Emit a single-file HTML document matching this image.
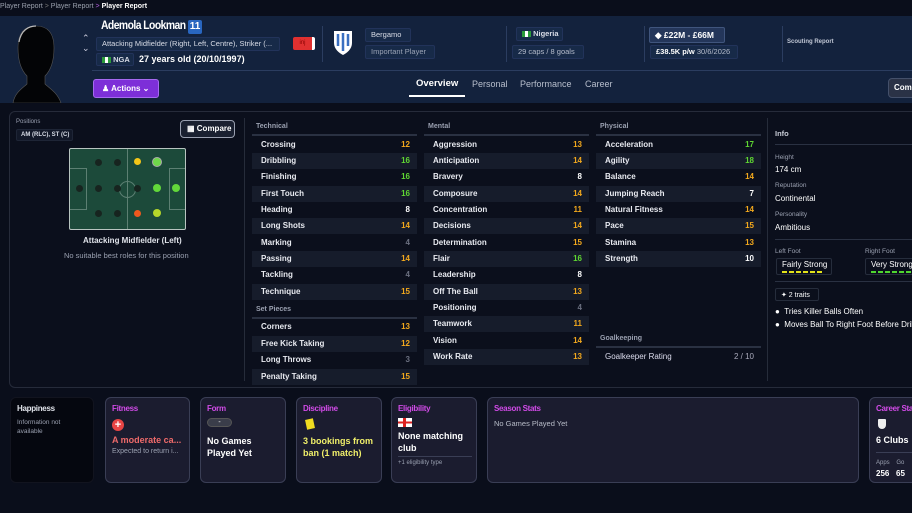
<!DOCTYPE html>
<html><head><meta charset="utf-8"><style>
*{margin:0;padding:0;box-sizing:border-box}
body{width:912px;height:513px;overflow:hidden;background:#0a0e1b;font-family:"Liberation Sans",sans-serif;color:#e8eaf0;position:relative;font-size:8px}
.a{position:absolute;white-space:nowrap}
.hdr{position:absolute;left:0;top:16px;width:912px;height:87px;background:#13223d}
.box{position:absolute;border:1px solid #22335a;background:#172a48;border-radius:2px;font-size:7.5px;padding:0 5px;color:#d8dce6;white-space:nowrap;overflow:hidden;line-height:12px}
.vd{position:absolute;width:1px;background:#2b3d60}
.main{position:absolute;left:9px;top:111px;width:910px;height:277px;border:1px solid #262b3a;border-radius:6px;background:#0b0f1c}
.row{position:absolute;height:16px;font-size:8px;font-weight:bold;line-height:16px;padding:0 9px;color:#e8eaf0}
.row.s{background:#161c2b}
.row b{position:absolute;right:7px;top:0}
.o{color:#f2a81d}.g{color:#5fd632}.w{color:#fff}.gr{color:#6b7080}
.sh{position:absolute;font-size:7px;font-weight:bold;color:#9aa0b0}
.ln{position:absolute;height:2px;background:#2a3142}
.card{position:absolute;top:397px;height:86px;border:1px solid #3a3e55;border-radius:6px;background:#1b1c2f}
.ct{position:absolute;left:6px;top:6px;font-size:8px;font-weight:bold;color:#d24be8;letter-spacing:-.3px}
.dot{position:absolute;width:7px;height:7px;border-radius:50%;background:#17241f}
.flag{display:inline-block;width:9px;height:6px;vertical-align:-0.5px;background:linear-gradient(90deg,#2a9a3a 33%,#fff 33% 66%,#2a9a3a 66%)}
</style></head><body>
<div class="a" style="left:0;top:3px;font-size:7px;color:#9aa0ad">Player Report <span style="color:#777">&gt;</span> Player Report <span style="color:#b55fe0">&gt;</span> <span style="color:#fff;font-weight:bold">Player Report</span></div>
<div class="hdr"></div>
<svg class="a" style="left:5px;top:20px" width="62" height="83" viewBox="0 0 62 83"><path d="M8 83 C10 72 18 68 22 64 L22 56 C16 50 13 40 13 28 C13 12 20 6 31 6 C42 6 49 12 49 28 C49 40 46 50 40 56 L40 64 C44 68 52 72 56 83Z" fill="#030406" stroke="#555" stroke-width="0.6"/><path d="M14 22 C16 10 24 6 31 6" stroke="#bbb" stroke-width="1.2" fill="none"/></svg>
<div class="a" style="left:82px;top:33px;font-size:9px;color:#ccd">&#8963;</div>
<div class="a" style="left:82px;top:43px;font-size:9px;color:#ccd">&#8964;</div>
<div class="a" style="left:101px;top:20px;font-size:11.5px;font-weight:bold;color:#fff;letter-spacing:-.6px;transform:scaleX(.9);transform-origin:left">Ademola Lookman</div>
<div class="a" style="left:188px;top:20px;width:14px;height:14px;background:#2966c0;border-radius:2px;font-size:10px;font-weight:bold;text-align:center;line-height:14px;color:#fff">11</div>
<div class="box" style="left:96px;top:37px;width:184px;height:14px">Attacking Midfielder (Right, Left, Centre), Striker (...</div>
<div class="box" style="left:96px;top:53px;width:38px;height:13px;font-weight:bold"><span class="flag"></span> NGA</div>
<div class="a" style="left:139px;top:54px;font-size:9px;font-weight:bold;color:#fff">27 years old (20/10/1997)</div>
<div class="a" style="left:293px;top:37px;width:22px;height:13px;background:#e03030;border-radius:2px;border-right:3px solid #fff;font-size:6px;color:#800;text-align:center;line-height:13px">inj</div>
<div class="vd" style="left:322px;top:26px;height:36px"></div>
<svg class="a" style="left:332px;top:29px" width="22" height="27" viewBox="0 0 22 27"><path d="M2 2 L20 2 L20 14 C20 20 15 24 11 26 C7 24 2 20 2 14Z" fill="#fff"/><path d="M6 5 L6 17 M11 4 L11 22 M16 5 L16 17" stroke="#3a6fc0" stroke-width="2.5"/></svg>
<div class="box" style="left:365px;top:28px;width:46px;height:14px">Bergamo</div>
<div class="box" style="left:365px;top:45px;width:70px;height:14px;color:#9aa3b5">Important Player</div>
<div class="vd" style="left:506px;top:26px;height:36px"></div>
<div class="box" style="left:516px;top:27px;width:47px;height:14px;font-weight:bold"><span class="flag"></span> Nigeria</div>
<div class="box" style="left:512px;top:45px;width:72px;height:14px;color:#b5bccb">29 caps / 8 goals</div>
<div class="vd" style="left:644px;top:26px;height:36px"></div>
<div class="box" style="left:649px;top:27px;width:76px;height:16px;background:#24365a;border-color:#40557d;font-weight:bold;font-size:8.5px;color:#fff;line-height:14px">&#9670; £22M - £66M</div>
<div class="box" style="left:650px;top:45px;width:88px;height:14px;color:#b5bccb"><b style="color:#fff">£38.5K p/w</b> 30/6/2026</div>
<div class="vd" style="left:782px;top:26px;height:36px"></div>
<div class="a" style="left:787px;top:39px;font-size:6px;font-weight:bold;color:#c0c6d4">Scouting Report</div>
<div class="a" style="left:92px;top:70px;width:820px;height:1px;background:#2b3d60"></div>
<div class="a" style="left:93px;top:79px;width:66px;height:19px;background:#7d2fd8;border:1px solid #a66af0;border-radius:3px;font-size:8px;font-weight:bold;color:#fff;line-height:17px;padding-left:8px">&#9823; Actions &#8964;</div>
<div class="a" style="left:416px;top:78px;font-size:9.5px;font-weight:bold;color:#fff">Overview</div>
<div class="a" style="left:409px;top:95px;width:56px;height:2px;background:#fff"></div>
<div class="a" style="left:472px;top:79px;font-size:9px;color:#b8bfcd">Personal</div>
<div class="a" style="left:520px;top:79px;font-size:9px;color:#b8bfcd">Performance</div>
<div class="a" style="left:585px;top:79px;font-size:9px;color:#b8bfcd">Career</div>
<div class="a" style="left:888px;top:78px;width:40px;height:20px;background:#2a3246;border:1px solid #44506a;border-radius:4px;font-size:8px;font-weight:bold;color:#fff;line-height:18px;padding-left:5px">Comp</div>

<div class="main"></div>
<div class="a" style="left:16px;top:119px;font-size:6px;color:#9aa0b0">Positions</div>
<div class="box" style="left:16px;top:129px;width:57px;height:12px;background:#121828;border-color:#1e2536;font-size:6px;font-weight:bold;line-height:10px;padding:0 4px">AM (RLC), ST (C)</div>
<div class="a" style="left:180px;top:120px;width:55px;height:18px;border:1px solid #9aa0b0;border-radius:4px;background:#1a2030;font-size:8px;font-weight:bold;color:#fff;line-height:16px;padding-left:6px">&#9638; Compare</div>
<div class="a" style="left:69px;top:148px;width:117px;height:82px;background:#1c4a3a;border:1px solid #b8c4c0;border-radius:2px;overflow:hidden">
<div class="a" style="left:57px;top:0;width:1px;height:82px;background:#5c7f72"></div>
<div class="a" style="left:49px;top:32px;width:17px;height:17px;border:1px solid #5c7f72;border-radius:50%"></div>
<div class="a" style="left:-1px;top:19px;width:18px;height:42px;border:1px solid #5c7f72"></div>
<div class="a" style="left:99px;top:19px;width:18px;height:42px;border:1px solid #5c7f72"></div>
<div class="dot" style="left:25px;top:10px"></div><div class="dot" style="left:44px;top:10px"></div>
<div class="dot" style="left:64px;top:9px;background:#f4c518"></div>
<div class="dot" style="left:82px;top:8px;width:10px;height:10px;background:#6fd84a;border:1px solid #aaa"></div>
<div class="dot" style="left:6px;top:36px"></div><div class="dot" style="left:25px;top:36px"></div><div class="dot" style="left:44px;top:36px"></div><div class="dot" style="left:64px;top:36px"></div>
<div class="dot" style="left:83px;top:35px;width:8px;height:8px;background:#62d83a"></div>
<div class="dot" style="left:102px;top:35px;width:8px;height:8px;background:#62d83a"></div>
<div class="dot" style="left:25px;top:61px"></div><div class="dot" style="left:44px;top:61px"></div>
<div class="dot" style="left:64px;top:61px;background:#f0581e"></div>
<div class="dot" style="left:83px;top:60px;width:8px;height:8px;background:#b5d62a"></div>
</div>
<div class="a" style="left:83px;top:236px;font-size:8px;font-weight:bold;color:#e0e3ea">Attacking Midfielder (Left)</div>
<div class="a" style="left:64px;top:251px;font-size:7.5px;color:#9aa0b0">No suitable best roles for this position</div>
<div class="a" style="left:244px;top:118px;width:1px;height:263px;background:#262c3a"></div>
<div class="a" style="left:767px;top:118px;width:1px;height:263px;background:#262c3a"></div>

<div class="sh" style="left:256px;top:123px">Technical</div><div class="ln" style="left:252px;top:134px;width:165px"></div>
<div class="row" style="left:252px;top:137px;width:165px">Crossing<b class="o">12</b></div>
<div class="row s" style="left:252px;top:153px;width:165px">Dribbling<b class="g">16</b></div>
<div class="row" style="left:252px;top:169px;width:165px">Finishing<b class="g">16</b></div>
<div class="row s" style="left:252px;top:186px;width:165px">First Touch<b class="g">16</b></div>
<div class="row" style="left:252px;top:202px;width:165px">Heading<b class="w">8</b></div>
<div class="row s" style="left:252px;top:218px;width:165px">Long Shots<b class="o">14</b></div>
<div class="row" style="left:252px;top:235px;width:165px">Marking<b class="gr">4</b></div>
<div class="row s" style="left:252px;top:251px;width:165px">Passing<b class="o">14</b></div>
<div class="row" style="left:252px;top:267px;width:165px">Tackling<b class="gr">4</b></div>
<div class="row s" style="left:252px;top:284px;width:165px">Technique<b class="o">15</b></div>
<div class="sh" style="left:256px;top:306px">Set Pieces</div><div class="ln" style="left:252px;top:317px;width:165px"></div>
<div class="row" style="left:252px;top:319px;width:165px">Corners<b class="o">13</b></div>
<div class="row s" style="left:252px;top:336px;width:165px">Free Kick Taking<b class="o">12</b></div>
<div class="row" style="left:252px;top:352px;width:165px">Long Throws<b class="gr">3</b></div>
<div class="row s" style="left:252px;top:369px;width:165px">Penalty Taking<b class="o">15</b></div>

<div class="sh" style="left:428px;top:123px">Mental</div><div class="ln" style="left:424px;top:134px;width:165px"></div>
<div class="row" style="left:424px;top:137px;width:165px">Aggression<b class="o">13</b></div>
<div class="row s" style="left:424px;top:153px;width:165px">Anticipation<b class="o">14</b></div>
<div class="row" style="left:424px;top:169px;width:165px">Bravery<b class="w">8</b></div>
<div class="row s" style="left:424px;top:186px;width:165px">Composure<b class="o">14</b></div>
<div class="row" style="left:424px;top:202px;width:165px">Concentration<b class="o">11</b></div>
<div class="row s" style="left:424px;top:218px;width:165px">Decisions<b class="o">14</b></div>
<div class="row" style="left:424px;top:235px;width:165px">Determination<b class="o">15</b></div>
<div class="row s" style="left:424px;top:251px;width:165px">Flair<b class="g">16</b></div>
<div class="row" style="left:424px;top:267px;width:165px">Leadership<b class="w">8</b></div>
<div class="row s" style="left:424px;top:284px;width:165px">Off The Ball<b class="o">13</b></div>
<div class="row" style="left:424px;top:300px;width:165px">Positioning<b class="gr">4</b></div>
<div class="row s" style="left:424px;top:316px;width:165px">Teamwork<b class="o">11</b></div>
<div class="row" style="left:424px;top:333px;width:165px">Vision<b class="o">14</b></div>
<div class="row s" style="left:424px;top:349px;width:165px">Work Rate<b class="o">13</b></div>

<div class="sh" style="left:600px;top:123px">Physical</div><div class="ln" style="left:596px;top:134px;width:165px"></div>
<div class="row" style="left:596px;top:137px;width:165px">Acceleration<b class="g">17</b></div>
<div class="row s" style="left:596px;top:153px;width:165px">Agility<b class="g">18</b></div>
<div class="row" style="left:596px;top:169px;width:165px">Balance<b class="o">14</b></div>
<div class="row s" style="left:596px;top:186px;width:165px">Jumping Reach<b class="w">7</b></div>
<div class="row" style="left:596px;top:202px;width:165px">Natural Fitness<b class="o">14</b></div>
<div class="row s" style="left:596px;top:218px;width:165px">Pace<b class="o">15</b></div>
<div class="row" style="left:596px;top:235px;width:165px">Stamina<b class="o">13</b></div>
<div class="row s" style="left:596px;top:251px;width:165px">Strength<b class="w">10</b></div>
<div class="sh" style="left:600px;top:335px">Goalkeeping</div><div class="ln" style="left:596px;top:346px;width:165px"></div>
<div class="row" style="left:596px;top:349px;width:165px;font-weight:normal;color:#dde">Goalkeeper Rating<b style="color:#aab;font-weight:normal">2 / 10</b></div>

<div class="a" style="left:775px;top:129px;font-size:7.5px;font-weight:bold;color:#c8ccd6">Info</div>
<div class="a" style="left:775px;top:144px;width:140px;height:1px;background:#2a3142"></div>
<div class="a" style="left:775px;top:154px;font-size:6.5px;color:#9aa0b0">Height</div>
<div class="a" style="left:775px;top:165px;font-size:8px;color:#fff">174 cm</div>
<div class="a" style="left:775px;top:182px;font-size:6.5px;color:#9aa0b0">Reputation</div>
<div class="a" style="left:775px;top:194px;font-size:8px;color:#fff">Continental</div>
<div class="a" style="left:775px;top:211px;font-size:6.5px;color:#9aa0b0">Personality</div>
<div class="a" style="left:775px;top:223px;font-size:8px;color:#fff">Ambitious</div>
<div class="a" style="left:775px;top:239px;width:140px;height:1px;background:#2a3142"></div>
<div class="a" style="left:775px;top:248px;font-size:6.5px;color:#9aa0b0">Left Foot</div>
<div class="a" style="left:865px;top:248px;font-size:6.5px;color:#9aa0b0">Right Foot</div>
<div class="a" style="left:776px;top:258px;width:56px;height:17px;border:1px solid #262d3c;border-radius:2px;font-size:8px;color:#fff;padding:1px 5px">Fairly Strong<div style="height:2px;margin-top:2px;width:40px;background:repeating-linear-gradient(90deg,#e2e21a 0 5px,transparent 5px 7px)"></div></div>
<div class="a" style="left:865px;top:258px;width:56px;height:17px;border:1px solid #262d3c;border-radius:2px;font-size:8px;color:#fff;padding:1px 5px">Very Strong<div style="height:2px;margin-top:2px;width:50px;background:repeating-linear-gradient(90deg,#4fd630 0 5px,transparent 5px 7px)"></div></div>
<div class="a" style="left:775px;top:281px;width:140px;height:1px;background:#2a3142"></div>
<div class="a" style="left:775px;top:288px;width:44px;height:13px;border:1px solid #262d3c;border-radius:2px;font-size:7px;color:#fff;padding:2px 5px">&#10022; 2 traits</div>
<div class="a" style="left:775px;top:307px;font-size:8px;color:#fff">&#9679; &nbsp;Tries Killer Balls Often</div>
<div class="a" style="left:775px;top:320px;font-size:8px;color:#fff">&#9679; &nbsp;Moves Ball To Right Foot Before Dribbling</div>

<div class="card" style="left:10px;width:84px;background:#05070f;border-color:#12141f"><div class="ct" style="color:#e0e3ea">Happiness</div><div class="a" style="left:6px;top:20px;font-size:6.5px;color:#9aa0b0;white-space:normal;width:60px;line-height:9px">Information not available</div></div>
<div class="card" style="left:105px;width:85px"><div class="ct">Fitness</div><div class="a" style="left:6px;top:21px;width:12px;height:12px;border-radius:50%;background:#e84545;color:#fff;font-size:11px;font-weight:bold;text-align:center;line-height:12px">+</div><div class="a" style="left:6px;top:37px;font-size:9px;font-weight:bold;color:#ee6a6a">A moderate ca...</div><div class="a" style="left:6px;top:50px;font-size:7px;color:#9aa0b0">Expected to return i...</div></div>
<div class="card" style="left:200px;width:86px"><div class="ct">Form</div><div class="a" style="left:6px;top:20px;width:25px;height:9px;border-radius:5px;background:#3a3d4a;border:1px solid #555;color:#fff;font-size:7px;text-align:center;line-height:7px">-</div><div class="a" style="left:6px;top:37px;font-size:9px;font-weight:bold;color:#fff;line-height:12px">No Games<br>Played Yet</div></div>
<div class="card" style="left:296px;width:86px"><div class="ct">Discipline</div><div class="a" style="left:9px;top:21px;width:8px;height:10px;background:#f0dc20;transform:rotate(-12deg)"></div><div class="a" style="left:6px;top:37px;font-size:9px;font-weight:bold;color:#f0ef6a;line-height:12px">3 bookings from<br>ban (1 match)</div></div>
<div class="card" style="left:391px;width:86px"><div class="ct">Eligibility</div><div class="a" style="left:6px;top:20px;width:14px;height:9px;background:linear-gradient(#fff 40%,#d22 40% 60%,#fff 60%)"><div style="margin-left:5px;width:3px;height:9px;background:#d22"></div></div><div class="a" style="left:6px;top:32px;font-size:9px;font-weight:bold;color:#fff;line-height:12px">None matching<br>club</div><div class="a" style="left:6px;top:58px;width:74px;height:1px;background:#3a3e55"></div><div class="a" style="left:6px;top:62px;font-size:6px;color:#9aa0b0">+1 eligibility type</div></div>
<div class="card" style="left:487px;width:372px"><div class="ct">Season Stats</div><div class="a" style="left:6px;top:21px;font-size:7.5px;color:#b8bcc8">No Games Played Yet</div></div>
<div class="card" style="left:869px;width:60px"><div class="ct">Career Stats</div><div class="a" style="left:8px;top:21px;width:8px;height:10px;background:#eee;border-radius:1px 1px 4px 4px"></div><div class="a" style="left:6px;top:37px;font-size:9px;font-weight:bold;color:#fff">6 Clubs</div><div class="a" style="left:6px;top:54px;width:60px;height:1px;background:#3a3e55"></div><div class="a" style="left:6px;top:62px;font-size:6px;color:#9aa0b0">Apps &nbsp;&nbsp;&nbsp;Go</div><div class="a" style="left:6px;top:71px;font-size:8px;font-weight:bold;color:#fff">256 &nbsp;&nbsp;65</div></div>
</body></html>
